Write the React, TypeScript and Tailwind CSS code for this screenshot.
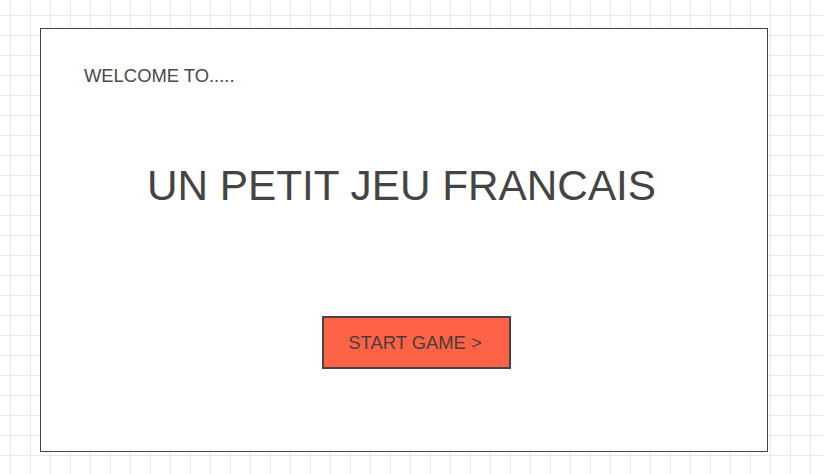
import React from 'react';

const App: React.FC = () => {
  return (
    <div
      className="w-full h-[474px] overflow-hidden bg-white bg-[linear-gradient(to_right,#e8e8e8_1px,transparent_1px),linear-gradient(to_bottom,#e8e8e8_1px,transparent_1px)] bg-[size:20px_20px] bg-[position:10px_15px] pt-[28px] pl-[40px]"
      style={{ fontFamily: '"Liberation Sans", Arial, sans-serif' }}
    >
      <div className="w-[728px] h-[424px] bg-white border border-[#444444] flex flex-col">
        <p className="mt-[37px] ml-[43px] text-[18.4px] leading-[20px] text-[#4a4a4a]">WELCOME TO.....</p>

        <h1 className="mt-[76px] pr-[5px] text-center text-[42.3px] leading-[48px] text-[#444444]">
          UN PETIT JEU FRANCAIS
        </h1>

        <button className="mt-[106px] ml-[281px] self-start w-[189px] h-[53px] pr-[3px] bg-[#fe6347] border-2 border-[#444444] text-[18.4px] text-[#4a3d38] flex items-center justify-center">
          START GAME &gt;
        </button>
      </div>
    </div>
  );
};

export default App;
